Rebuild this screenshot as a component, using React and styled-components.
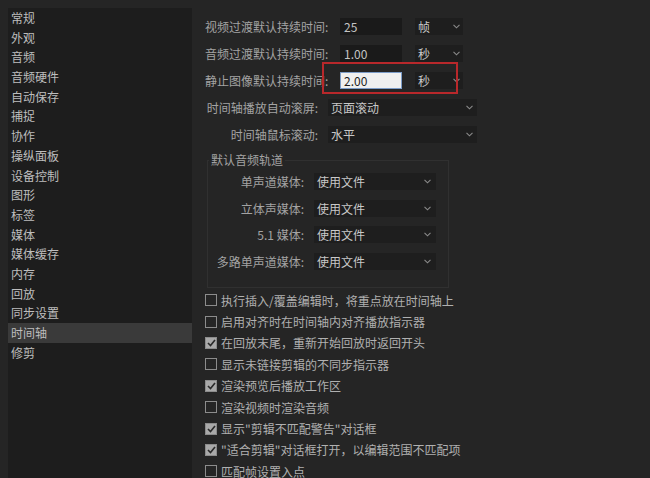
import React from 'react';
import styled, { createGlobalStyle } from 'styled-components';

const GlobalStyle = createGlobalStyle`
  html, body {
    margin: 0;
    padding: 0;
    background: #252525;
    height: 100%;
    overflow: hidden;
  }
  body {
    font-family: "Noto Sans CJK SC", "Noto Sans", "Liberation Sans", sans-serif;
    font-size: 12px;
    color: #b4b4b4;
  }
`;

const Window = styled.div`
  display: flex;
  height: 478px;
  padding: 8px 0 0 8px;
  box-sizing: border-box;
`;

const Sidebar = styled.ul`
  list-style: none;
  margin: 0;
  padding: 0;
  width: 184px;
  flex-shrink: 0;
  background: #1d1d1d;
`;

const SideItem = styled.li`
  height: 19.7px;
  line-height: 19.7px;
  padding-left: 3px;
  color: #bdbdbd;
  background: ${props => (props.$active ? '#3a3a3a' : 'transparent')};
`;

const Content = styled.div`
  flex: 1;
  display: flex;
  flex-direction: column;
  padding: 10px 0 0 13px;
`;

const Rows = styled.div`
  display: flex;
  flex-direction: column;
  gap: 10px;
`;

const Row = styled.div`
  position: relative;
  display: flex;
  align-items: center;
  height: 17px;
`;

const Label = styled.span`
  width: ${props => props.$width}px;
  flex-shrink: 0;
  text-align: ${props => (props.$right ? 'right' : 'left')};
  padding-right: ${props => (props.$right ? 10 : 0)}px;
  box-sizing: border-box;
  color: #a3a3a3;
  white-space: nowrap;
  line-height: 17px;
`;

const NumberInput = styled.div`
  width: 62px;
  height: 17px;
  box-sizing: border-box;
  padding-left: 3px;
  background: ${props => (props.$focus ? '#efefef' : '#1a1a1a')};
  color: ${props => (props.$focus ? '#1e1e1e' : '#c4c4c4')};
  border: 1px solid ${props => (props.$focus ? '#7c9cc8' : 'transparent')};
  line-height: 15px;
  margin-right: 13px;
`;

const Select = styled.div`
  position: relative;
  width: ${props => props.$width}px;
  height: 17px;
  box-sizing: border-box;
  padding-left: 3px;
  line-height: 17px;
  background: #1e1e1e;
  color: #c8c8c8;
  flex-shrink: 0;
`;

const Chevron = styled.svg`
  position: absolute;
  right: ${props => props.$right}px;
  top: 6px;
  width: 7px;
  height: 5px;
`;

const Highlight = styled.div`
  position: absolute;
  left: 117px;
  top: -10px;
  width: 136px;
  height: 32px;
  box-sizing: border-box;
  border: 2px solid #b8282b;
  pointer-events: none;
`;

const Group = styled.fieldset`
  margin: 10px 0 0 2px;
  padding: 6px 0 17px 0;
  width: 242px;
  box-sizing: border-box;
  border: 1px solid #303030;
  display: flex;
  flex-direction: column;
  gap: 9.5px;
`;

const Legend = styled.legend`
  padding: 0 2px;
  margin-left: 1px;
  color: #a3a3a3;
  line-height: 14px;
`;

const Checks = styled.div`
  display: flex;
  flex-direction: column;
  margin-top: 2px;
`;

const CheckRow = styled.label`
  display: flex;
  align-items: center;
  height: 21.4px;
  color: #b0b0b0;
  white-space: nowrap;
`;

const Box = styled.span`
  width: 12px;
  height: 12px;
  box-sizing: border-box;
  margin-right: 4px;
  border: 1px solid #8c8c8c;
  background: ${props => (props.$checked ? '#a9a9a9' : 'transparent')};
  display: flex;
  align-items: center;
  justify-content: center;
`;

const Arrow = ({ right = 5 }) => (
  <Chevron $right={right} viewBox="0 0 7 5">
    <polyline points="0.5,0.8 3.5,3.8 6.5,0.8" fill="none" stroke="#8a8a8a" strokeWidth="1.1" />
  </Chevron>
);

const Dropdown = ({ width, value, right }) => (
  <Select $width={width}>
    {value}
    <Arrow right={right} />
  </Select>
);

const Checkbox = ({ checked, children }) => (
  <CheckRow>
    <Box $checked={checked}>
      {checked && (
        <svg width="9" height="8" viewBox="0 0 9 8">
          <polyline points="1,4 3.5,6.5 8,1" fill="none" stroke="#2a2a2a" strokeWidth="1.6" />
        </svg>
      )}
    </Box>
    {children}
  </CheckRow>
);

const sections = [
  '常规', '外观', '音频', '音频硬件', '自动保存', '捕捉', '协作', '操纵面板', '设备控制',
  '图形', '标签', '媒体', '媒体缓存', '内存', '回放', '同步设置', '时间轴', '修剪',
];

const durations = [
  { label: '视频过渡默认持续时间:', value: '25', unit: '帧' },
  { label: '音频过渡默认持续时间:', value: '1.00', unit: '秒' },
  { label: '静止图像默认持续时间:', value: '2.00', unit: '秒', focus: true },
];

const tracks = ['单声道媒体:', '立体声媒体:', '5.1 媒体:', '多路单声道媒体:'];

const options = [
  { text: '执行插入/覆盖编辑时，将重点放在时间轴上', checked: false },
  { text: '启用对齐时在时间轴内对齐播放指示器', checked: false },
  { text: '在回放末尾，重新开始回放时返回开头', checked: true },
  { text: '显示未链接剪辑的不同步指示器', checked: false },
  { text: '渲染预览后播放工作区', checked: true },
  { text: '渲染视频时渲染音频', checked: false },
  { text: '显示"剪辑不匹配警告"对话框', checked: true },
  { text: '"适合剪辑"对话框打开，以编辑范围不匹配项', checked: true },
  { text: '匹配帧设置入点', checked: false },
];

const App = () => (
  <>
    <GlobalStyle />
    <Window>
      <Sidebar>
        {sections.map(name => (
          <SideItem key={name} $active={name === '时间轴'}>{name}</SideItem>
        ))}
      </Sidebar>
      <Content>
        <Rows>
          {durations.map(d => (
            <Row key={d.label}>
              <Label $width={135}>{d.label}</Label>
              <NumberInput $focus={d.focus}>{d.value}</NumberInput>
              <Dropdown width={48} value={d.unit} right={3} />
              {d.focus && <Highlight />}
            </Row>
          ))}
          <Row>
            <Label $width={123} $right>时间轴播放自动滚屏:</Label>
            <Dropdown width={149} value="页面滚动" right={4} />
          </Row>
          <Row>
            <Label $width={123} $right>时间轴鼠标滚动:</Label>
            <Dropdown width={149} value="水平" right={4} />
          </Row>
        </Rows>
        <Group>
          <Legend>默认音频轨道</Legend>
          {tracks.map(t => (
            <Row key={t}>
              <Label $width={106} $right>{t}</Label>
              <Dropdown width={122} value="使用文件" right={5} />
            </Row>
          ))}
        </Group>
        <Checks>
          {options.map(o => (
            <Checkbox key={o.text} checked={o.checked}>{o.text}</Checkbox>
          ))}
        </Checks>
      </Content>
    </Window>
  </>
);

export default App;
